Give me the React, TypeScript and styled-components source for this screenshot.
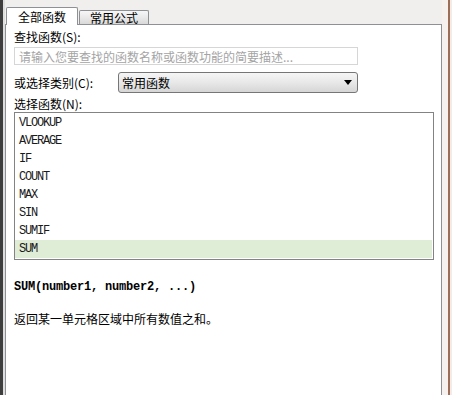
import React from "react";
import styled, { createGlobalStyle } from "styled-components";

const GlobalStyle = createGlobalStyle`
  html, body { margin: 0; padding: 0; background: #ffffff; }
  body {
    font-family: "Noto Sans CJK SC", "Liberation Sans", sans-serif;
    font-size: 12px;
    color: #000;
  }
  * { box-sizing: border-box; }
`;

const Frame = styled.div`
  display: flex;
  width: 452px;
  height: 395px;
  overflow: hidden;
`;

const DarkEdge = styled.div`
  width: 3px;
  background: #3e3e3e;
`;

const EdgeGap = styled.div`
  width: 2px;
  background: #dedede;
`;

const Dialog = styled.div`
  width: 437px;
  display: flex;
  flex-direction: column;
  background: #f1eeee;
`;

const RightEdge = styled.div`
  display: flex;
  width: 10px;
`;

const EdgeBand = styled.div<{ $w: number; $c: string }>`
  width: ${(p) => p.$w}px;
  background: ${(p) => p.$c};
`;

const TabStrip = styled.div`
  display: flex;
  align-items: flex-end;
  height: 25px;
  padding-left: 1px;
  border-bottom: 1px solid #8d9094;
`;

const Tab = styled.div<{ $active?: boolean }>`
  display: flex;
  align-items: center;
  justify-content: center;
  border: 1px solid #8d9094;
  border-bottom: none;
  border-radius: 2px 2px 0 0;
  font-size: 12px;
  line-height: 14px;
  color: #000;
  ${(p) =>
    p.$active
      ? `
    width: 72px;
    height: 18px;
    margin-bottom: -1px;
    background: #ffffff;
    position: relative;
  `
      : `
    width: 70px;
    height: 14px;
    margin-left: 1px;
    background: linear-gradient(#f7f7f7, #e6e6e6 60%, #d9d9d9);
  `}
`;

const Panel = styled.div`
  flex: 1;
  background: #ffffff;
  border-left: 1px solid #8d9094;
  border-right: 1px solid #8d9094;
  padding: 5px 7px 0 8px;
  display: flex;
  flex-direction: column;
`;

const Label = styled.div<{ $mt?: number }>`
  font-size: 12px;
  line-height: 14px;
  margin-top: ${(p) => p.$mt ?? 0}px;
  white-space: nowrap;
`;

const SearchBox = styled.div`
  margin-top: 3px;
  width: 344px;
  height: 18px;
  border: 1px solid #d6d6d6;
  padding-left: 4px;
  display: flex;
  align-items: center;
  font-size: 12px;
  color: #a4a4a4;
  white-space: nowrap;
  overflow: hidden;
`;

const SelectRow = styled.div`
  display: flex;
  align-items: center;
  margin-top: 7px;
  height: 21px;
`;

const RowLabel = styled(Label)`
  width: 104px;
`;

const SelectBox = styled.div`
  width: 240px;
  height: 21px;
  border: 1px solid #767676;
  border-radius: 3px;
  background: linear-gradient(#f6f6f6, #e8e8e8 50%, #d6d6d6);
  display: flex;
  align-items: center;
  justify-content: space-between;
  padding: 0 5px 0 3px;
  font-size: 12px;
`;

const List = styled.div`
  margin-top: 1px;
  width: 420px;
  height: 148px;
  border: 1px solid #838383;
  padding-top: 1px;
  display: flex;
  flex-direction: column;
`;

const Item = styled.div<{ $selected?: boolean }>`
  height: 18px;
  line-height: 18px;
  padding-left: 4px;
  margin-right: 1px;
  font-family: "Liberation Mono", "DejaVu Sans Mono", monospace;
  font-size: 12px;
  letter-spacing: -1.2px;
  color: #1a1a1a;
  background: ${(p) => (p.$selected ? "#dfecd6" : "transparent")};
`;

const Signature = styled.div`
  margin-top: 20px;
  line-height: 14px;
  font-family: "Liberation Mono", "DejaVu Sans Mono", monospace;
  font-weight: bold;
  font-size: 12px;
  letter-spacing: -0.2px;
  white-space: pre;
`;

const Description = styled.div`
  margin-top: 18px;
  line-height: 14px;
  font-size: 12px;
`;

const functions = ["VLOOKUP", "AVERAGE", "IF", "COUNT", "MAX", "SIN", "SUMIF", "SUM"];

export default function App() {
  return (
    <>
      <GlobalStyle />
      <Frame>
        <DarkEdge />
        <EdgeGap />
        <Dialog>
          <TabStrip>
            <Tab $active>全部函数</Tab>
            <Tab>常用公式</Tab>
          </TabStrip>
          <Panel>
            <Label>查找函数(S):</Label>
            <SearchBox>请输入您要查找的函数名称或函数功能的简要描述...</SearchBox>
            <SelectRow>
              <RowLabel>或选择类别(C):</RowLabel>
              <SelectBox>
                <span>常用函数</span>
                <svg width="8" height="5" viewBox="0 0 8 5">
                  <path d="M0 0 H8 L4 5 Z" fill="#000" />
                </svg>
              </SelectBox>
            </SelectRow>
            <Label $mt={4}>选择函数(N):</Label>
            <List>
              {functions.map((f, i) => (
                <Item key={f} $selected={i === functions.length - 1}>
                  {f}
                </Item>
              ))}
            </List>
            <Signature>SUM(number1, number2, ...)</Signature>
            <Description>返回某一单元格区域中所有数值之和。</Description>
          </Panel>
        </Dialog>
        <RightEdge>
          <EdgeBand $w={6} $c="#f6f1ef" />
          <EdgeBand $w={2} $c="#9c6e58" />
          <EdgeBand $w={2} $c="#f3ebe7" />
        </RightEdge>
      </Frame>
    </>
  );
}
